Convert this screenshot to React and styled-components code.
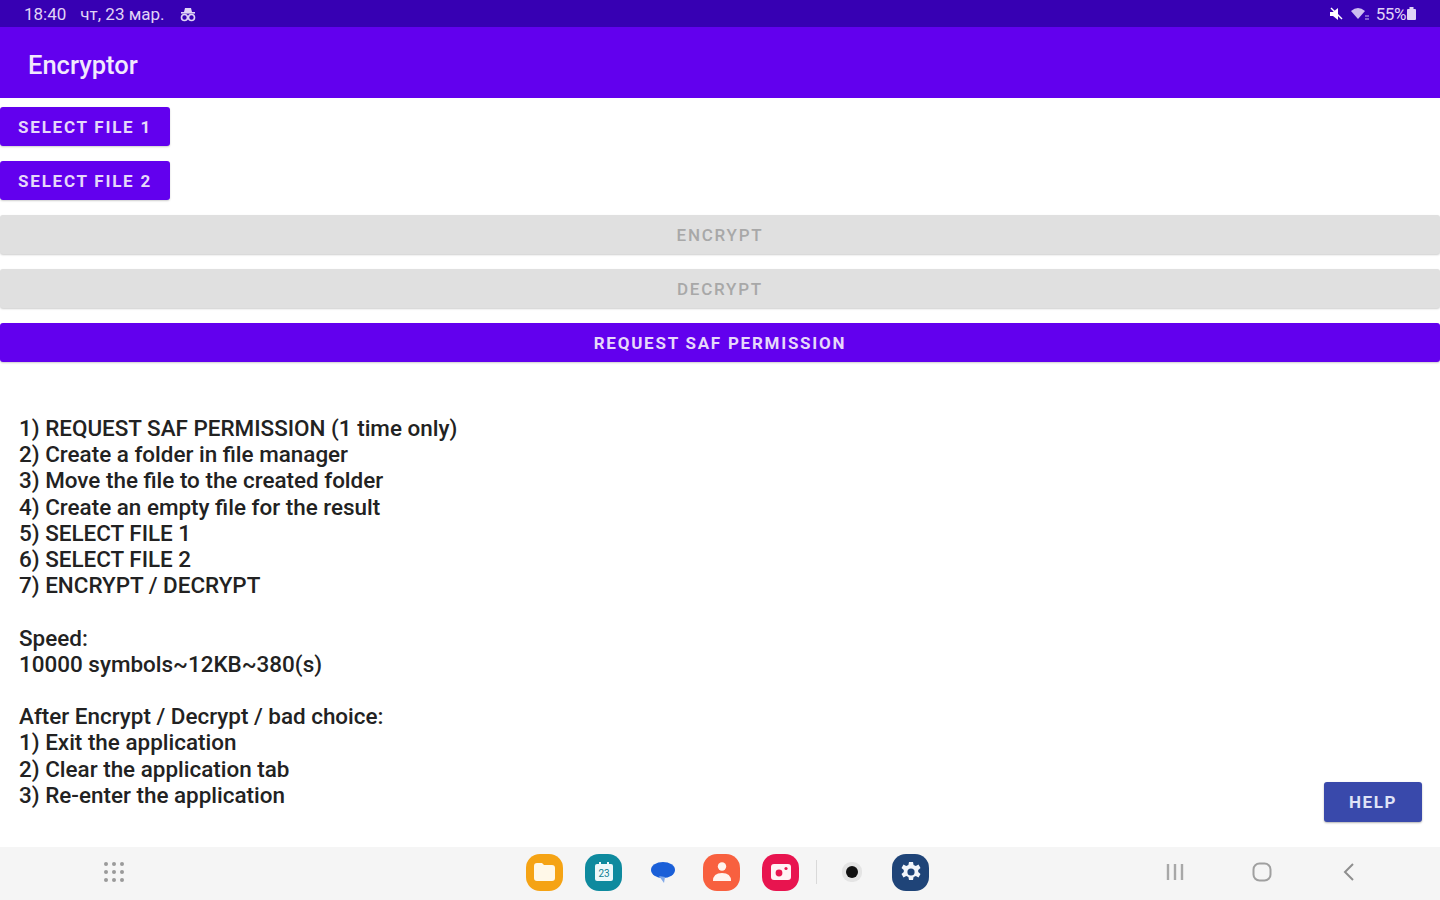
import React from 'react';
import styled, { createGlobalStyle } from 'styled-components';

const GlobalStyle = createGlobalStyle`
  html, body { margin: 0; padding: 0; background: #fff; }
  body { font-family: Roboto, "Liberation Sans", sans-serif; }
`;

const Page = styled.div`
  width: 1440px;
  height: 900px;
  display: flex;
  flex-direction: column;
  overflow: hidden;
`;

const StatusBar = styled.div`
  height: 27px;
  flex: none;
  background: #3700b3;
  color: #e0d4f6;
  font-size: 17px;
  display: flex;
  align-items: center;
  justify-content: space-between;
  padding: 0 24px 0 24px;
`;

const StatusGroup = styled.div`
  display: flex;
  align-items: center;
  gap: ${(p) => p.$gap || 6}px;
`;

const AppBar = styled.div`
  height: 71px;
  flex: none;
  box-sizing: border-box;
  background: #6200ee;
  color: #f1e8fd;
  font-size: 25.5px;
  font-weight: 500;
  display: flex;
  align-items: center;
  padding: 4px 0 0 28px;
`;

const Buttons = styled.div`
  flex: none;
  display: flex;
  flex-direction: column;
  align-items: flex-start;
  gap: 15px;
  padding-top: 9px;
`;

const ActionButton = styled.div`
  height: 39px;
  width: ${(p) => (p.$full ? '1440px' : '170px')};
  border-radius: 3px;
  background: ${(p) => (p.$disabled ? '#e0e0e0' : '#6200ee')};
  color: ${(p) => (p.$disabled ? '#a8a8a8' : '#e6d8fa')};
  font-size: 17px;
  font-weight: ${(p) => (p.$disabled ? 500 : 700)};
  letter-spacing: 1.75px;
  display: flex;
  align-items: center;
  justify-content: center;
  box-shadow: 0 1px 2px rgba(0, 0, 0, 0.2);
`;

const Content = styled.div`
  flex: 1;
  display: flex;
  justify-content: space-between;
  align-items: flex-start;
  padding: 53px 18px 25px 19px;
`;

const Instructions = styled.div`
  font-size: 22.45px;
  font-weight: 500;
  line-height: 26.2px;
  color: #222;
  white-space: pre;
`;

const HelpButton = styled.div`
  align-self: flex-end;
  width: 98px;
  height: 40px;
  border-radius: 3px;
  background: #3949ab;
  color: #dfe3f6;
  font-size: 17px;
  font-weight: 700;
  letter-spacing: 1.6px;
  display: flex;
  align-items: center;
  justify-content: center;
  box-shadow: 0 1px 2px rgba(0, 0, 0, 0.3);
`;

const NavBar = styled.div`
  height: 53px;
  flex: none;
  box-sizing: border-box;
  padding-bottom: 3px;
  background: #f5f5f5;
  display: grid;
  grid-template-columns: 526px 404px 1fr;
  align-items: center;
`;

const GridCell = styled.div`
  padding-left: 103px;
  display: flex;
`;

const Dock = styled.div`
  display: flex;
  align-items: center;
`;

const AppIcon = styled.div`
  width: 37px;
  height: 37px;
  flex: none;
  margin-right: ${(p) => p.$mr ?? 22}px;
  border-radius: 14px;
  background: ${(p) => p.$bg || 'transparent'};
  display: flex;
  align-items: center;
  justify-content: center;
`;

const Divider = styled.div`
  width: 1px;
  height: 24px;
  flex: none;
  background: #d9d9d9;
  margin-right: 16px;
`;

const SoftKeys = styled.div`
  display: flex;
  align-items: center;
  padding-left: 235px;
  gap: 67px;
`;

const instructions = `1) REQUEST SAF PERMISSION (1 time only)
2) Create a folder in file manager
3) Move the file to the created folder
4) Create an empty file for the result
5) SELECT FILE 1
6) SELECT FILE 2
7) ENCRYPT / DECRYPT

Speed:
10000 symbols~12KB~380(s)

After Encrypt / Decrypt / bad choice:
1) Exit the application
2) Clear the application tab
3) Re-enter the application`;

const App = () => (
  <Page>
    <GlobalStyle />
    <StatusBar>
      <StatusGroup $gap={14}>
        <span>18:40</span>
        <span>чт, 23 мар.</span>
        <svg width="18" height="18" viewBox="0 0 18 18">
          <path d="M5 7 L6 3 H12 L13 7 Z" fill="#e0d4f6" />
          <rect x="2" y="7" width="14" height="1.6" fill="#e0d4f6" />
          <circle cx="5.5" cy="12.5" r="3" fill="none" stroke="#e0d4f6" strokeWidth="1.6" />
          <circle cx="12.5" cy="12.5" r="3" fill="none" stroke="#e0d4f6" strokeWidth="1.6" />
        </svg>
      </StatusGroup>
      <StatusGroup $gap={6}>
        <svg width="16" height="16" viewBox="0 0 16 16">
          <path d="M2 6 H5 L10 2 V14 L5 10 H2 Z" fill="#fff" />
          <path d="M3 2 L14 13" stroke="#fff" strokeWidth="1.4" />
        </svg>
        <svg width="20" height="14" viewBox="0 0 20 14">
          <path d="M1 4 Q8 -2 15 4 L8 12 Z" fill="#cdbdf0" />
          <path d="M15 9 h4 M15 12 h4" stroke="#cdbdf0" strokeWidth="1.2" />
        </svg>
        <span style={{ letterSpacing: -0.4 }}>55%</span>
        <svg width="9" height="14" viewBox="0 0 9 14" style={{ marginLeft: -5 }}>
          <rect x="0" y="2" width="9" height="11" rx="1" fill="#e0d4f6" />
          <rect x="2.5" y="0" width="4" height="2" fill="#e0d4f6" />
        </svg>
      </StatusGroup>
    </StatusBar>
    <AppBar>Encryptor</AppBar>
    <Buttons>
      <ActionButton>SELECT FILE 1</ActionButton>
      <ActionButton>SELECT FILE 2</ActionButton>
      <ActionButton $full $disabled>ENCRYPT</ActionButton>
      <ActionButton $full $disabled>DECRYPT</ActionButton>
      <ActionButton $full>REQUEST SAF PERMISSION</ActionButton>
    </Buttons>
    <Content>
      <Instructions>{instructions}</Instructions>
      <HelpButton>HELP</HelpButton>
    </Content>
    <NavBar>
      <GridCell>
        <svg width="22" height="22" viewBox="0 0 22 22" fill="#9a9a9a">
          {[3, 11, 19].map((y) =>
            [3, 11, 19].map((x) => <circle key={`${x}-${y}`} cx={x} cy={y} r="2" />)
          )}
        </svg>
      </GridCell>
      <Dock>
        <AppIcon $bg="#f5a314">
          <svg width="25" height="22" viewBox="0 0 25 22">
            <path d="M2 5 Q2 2 5 2 H10 L12 4 H20 Q23 4 23 7 V17 Q23 20 20 20 H5 Q2 20 2 17 Z" fill="#fff8e8" />
          </svg>
        </AppIcon>
        <AppIcon $bg="#0e8a9e">
          <svg width="24" height="24" viewBox="0 0 24 24">
            <rect x="3" y="4" width="18" height="17" rx="2" fill="#eef8fa" />
            <rect x="7" y="2" width="2" height="4" fill="#eef8fa" />
            <rect x="15" y="2" width="2" height="4" fill="#eef8fa" />
            <text x="12" y="17" textAnchor="middle" fontSize="10" fontFamily="Roboto" fill="#0e7f92">23</text>
          </svg>
        </AppIcon>
        <AppIcon>
          <svg width="28" height="28" viewBox="0 0 28 28">
            <ellipse cx="14" cy="12" rx="12" ry="8" fill="#1a5fd8" />
            <path d="M10 18 L16 19 L15 25 Z" fill="#7fa8e8" />
          </svg>
        </AppIcon>
        <AppIcon $bg="#f8603f">
          <svg width="24" height="26" viewBox="0 0 24 26" fill="#fff4ef">
            <circle cx="12" cy="7.5" r="4.2" />
            <path d="M3 22 Q3 14 12 14 Q21 14 21 22 Z" />
          </svg>
        </AppIcon>
        <AppIcon $bg="#e8144f" $mr={17}>
          <svg width="26" height="24" viewBox="0 0 26 24">
            <rect x="3" y="4" width="20" height="16" rx="3" fill="#fff2f5" />
            <circle cx="11" cy="13" r="3.4" fill="#e8144f" />
            <circle cx="18" cy="8.5" r="1.6" fill="#e8144f" />
          </svg>
        </AppIcon>
        <Divider />
        <AppIcon>
          <svg width="30" height="30" viewBox="0 0 30 30">
            <rect x="5" y="5" width="20" height="20" rx="9" fill="#e4e4e4" />
            <circle cx="15" cy="15" r="6" fill="#111" />
          </svg>
        </AppIcon>
        <AppIcon $bg="#1f4478" $mr={0}>
          <svg width="24" height="24" viewBox="0 0 24 24">
            <path
              d="M10 2h4l.6 3 2.2 1 2.7-1.5 2 3.4-2.3 2 0 2.2 2.3 2-2 3.4-2.7-1.5-2.2 1-.6 3h-4l-.6-3-2.2-1-2.7 1.5-2-3.4 2.3-2 0-2.2-2.3-2 2-3.4 2.7 1.5 2.2-1z"
              fill="#f2f5fa"
            />
            <circle cx="12" cy="12" r="3.6" fill="#1f4478" />
          </svg>
        </AppIcon>
      </Dock>
      <SoftKeys>
        <svg width="20" height="18" viewBox="0 0 20 18" stroke="#a8a8a8" strokeWidth="2.4">
          <path d="M3 1 V17 M10 1 V17 M17 1 V17" />
        </svg>
        <svg width="20" height="20" viewBox="0 0 20 20" fill="none" stroke="#a0a0a0" strokeWidth="2">
          <rect x="1.5" y="1.5" width="17" height="17" rx="6" />
        </svg>
        <svg width="20" height="18" viewBox="0 0 20 18" fill="none" stroke="#8e8e8e" strokeWidth="2">
          <path d="M14 1 L6 9 L14 17" />
        </svg>
      </SoftKeys>
    </NavBar>
  </Page>
);

export default App;
